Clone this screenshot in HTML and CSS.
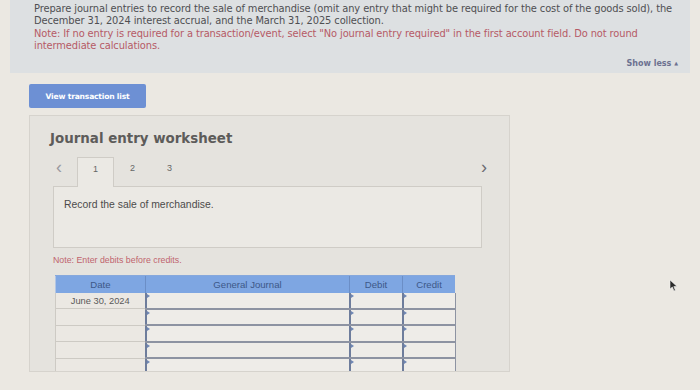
FILE: index.html
```html
<!DOCTYPE html>
<html lang="en">
<head>
  <meta charset="UTF-8" />
  <meta name="viewport" content="width=device-width, initial-scale=1.0" />
  <title>Journal entry worksheet</title>
  <link rel="stylesheet" href="styles.css">
</head>
<body>
  <div class="prompt">
    <p class="lead">Prepare journal entries to record the sale of merchandise (omit any entry that might be required for the cost of the goods sold), the December 31, 2024 interest accrual, and the March 31, 2025 collection.</p>
    <p class="note">Note: If no entry is required for a transaction/event, select "No journal entry required" in the first account field. Do not round intermediate calculations.</p>
    <div class="toggle">Show less <span class="caret">&#9650;</span></div>
  </div>

  <div class="main">
    <button class="list-btn">View transaction list</button>

    <section class="worksheet">
      <h2>Journal entry worksheet</h2>

      <div class="tabs">
        <span class="arrow">&lsaquo;</span>
        <span class="tab active">1</span>
        <span class="tab">2</span>
        <span class="tab">3</span>
        <span class="arrow next">&rsaquo;</span>
      </div>

      <div class="task">Record the sale of merchandise.</div>

      <p class="hint">Note: Enter debits before credits.</p>

      <table class="journal">
        <thead>
          <tr>
            <th class="c-date">Date</th>
            <th class="c-acct">General Journal</th>
            <th class="c-num">Debit</th>
            <th class="c-num">Credit</th>
          </tr>
        </thead>
        <tbody>
          <tr>
            <td class="date">June 30, 2024</td>
            <td class="field"></td>
            <td class="field"></td>
            <td class="field"></td>
          </tr>
          <tr>
            <td class="date"></td>
            <td class="field"></td>
            <td class="field"></td>
            <td class="field"></td>
          </tr>
          <tr>
            <td class="date"></td>
            <td class="field"></td>
            <td class="field"></td>
            <td class="field"></td>
          </tr>
          <tr>
            <td class="date"></td>
            <td class="field"></td>
            <td class="field"></td>
            <td class="field"></td>
          </tr>
          <tr>
            <td class="date"></td>
            <td class="field"></td>
            <td class="field"></td>
            <td class="field"></td>
          </tr>
        </tbody>
      </table>
    </section>
  </div>

  <svg class="cursor" width="9" height="13" viewBox="0 0 9 13">
    <path d="M1 1 L1 10 L3.3 8 L5 12 L6.4 11.3 L4.8 7.6 L8 7.4 Z" fill="#2b2b2b" stroke="#f2f2f2" stroke-width="0.6" />
  </svg>
</body>
</html>
```

FILE: styles.css
```css
body {
  margin: 0;
  background: #ebe8e2;
  font-family: "Liberation Sans", Arial, sans-serif;
  color: #4d4d4d;
  width: 700px;
  height: 390px;
  overflow: hidden;
  position: relative;
}

.prompt {
  margin: 0 10px;
  height: 73px;
  box-sizing: border-box;
  padding: 3px 12px 0 24px;
  background: #dde0e2;
  font-family: "DejaVu Sans", Verdana, sans-serif;
  font-size: 9.9px;
  line-height: 12.3px;
  letter-spacing: -0.1px;
}

.prompt p {
  margin: 0;
}

.lead {
  color: #4f4f52;
}

.note {
  color: #b65a66;
}

.toggle {
  text-align: right;
  margin-top: 5px;
  font-weight: bold;
  font-size: 8px;
  letter-spacing: 0;
  color: #6c7190;
}

.caret {
  font-size: 5px;
  vertical-align: 1px;
}

.main {
  padding: 11px 0 0 29px;
}

.list-btn {
  display: block;
  width: 117px;
  height: 24px;
  border: none;
  border-radius: 2px;
  background: #6d90d4;
  color: #fff;
  font-family: "DejaVu Sans", Verdana, sans-serif;
  font-weight: bold;
  font-size: 7.6px;
  letter-spacing: -0.2px;
  padding: 0;
}

.worksheet {
  margin-top: 7px;
  width: 481px;
  height: 257px;
  box-sizing: border-box;
  padding: 15px 0 0 23px;
  background: #e5e3de;
  border: 1px solid #d6d3cd;
  overflow: hidden;
}

.worksheet h2 {
  margin: 0 0 0 -3px;
  font-family: "DejaVu Sans", Verdana, sans-serif;
  font-size: 13.4px;
  line-height: 16px;
  color: #5d5c5a;
}

.tabs {
  display: flex;
  align-items: flex-start;
  width: 434px;
  height: 29px;
  margin-top: 10px;
  font-size: 9px;
  color: #666;
}

.arrow {
  font-size: 18px;
  color: #9a9aa0;
  width: 21px;
  padding-left: 3px;
  line-height: 20px;
}

.arrow.next {
  margin-left: auto;
  color: #6d6d72;
  width: auto;
  padding-left: 0;
}

.tab {
  width: 37px;
  height: 22px;
  box-sizing: border-box;
  display: flex;
  align-items: center;
  justify-content: center;
}

.tab.active {
  position: relative;
  z-index: 1;
  height: 30px;
  margin-bottom: -1px;
  padding-bottom: 8px;
  border: 1px solid #cfccc6;
  border-bottom: none;
  background: #ebe9e4;
}

.task {
  width: 429px;
  height: 62px;
  box-sizing: border-box;
  padding: 12px 10px;
  border: 1px solid #cfccc6;
  background: #ebe9e4;
  font-size: 10.4px;
  color: #4b4b4b;
}

.hint {
  margin: 7px 0 0;
  font-size: 8.8px;
  color: #c0646d;
}

.journal {
  margin: 10px 0 0 2px;
  width: 400px;
  border-collapse: collapse;
  table-layout: fixed;
  font-size: 9.6px;
}

.journal th {
  height: 17px;
  padding: 0;
  background: #7ea6e2;
  color: #3d5888;
  font-weight: normal;
  border-left: 1px solid #6b8ec6;
  border-top: 1px solid #86a8dc;
}

.journal th:first-child {
  border-left: 1px solid #b3c6e4;
}

.c-date {
  width: 89px;
}

.c-acct {
  width: 203px;
}

.c-num {
  width: 52px;
}

.journal td {
  height: 14.5px;
  padding: 0;
}

.date {
  background: #ebe8e3;
  border: 1px solid #cdcac4;
  border-top: none;
  text-align: center;
  color: #5a5a5a;
  font-size: 9.3px;
}

.field {
  position: relative;
  background: #eeece8;
  border-left: 2px solid #6e7d9c;
  border-bottom: 2px solid #8d93a2;
}

.field:last-child {
  border-right: 1px solid #8d93a2;
}

.field::before {
  content: "";
  position: absolute;
  left: 0;
  top: 1px;
  border-left: 3px solid #6f86b4;
  border-top: 2px solid transparent;
  border-bottom: 2px solid transparent;
}

.cursor {
  position: absolute;
  left: 669px;
  top: 279px;
}
```
